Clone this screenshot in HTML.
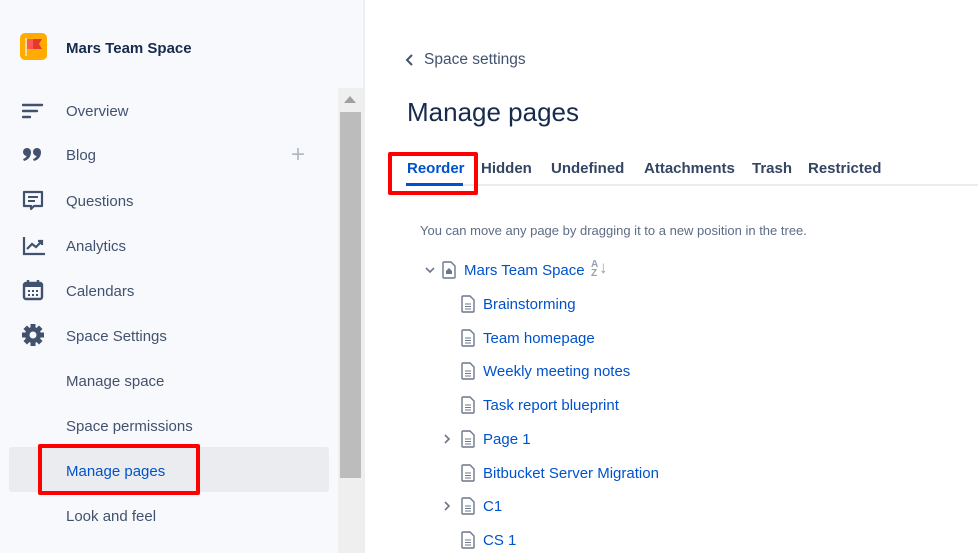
<!DOCTYPE html>
<html><head><meta charset="utf-8"><style>
*{margin:0;padding:0;box-sizing:border-box}
body{width:978px;height:553px;overflow:hidden;background:#fff;font-family:"Liberation Sans",sans-serif;position:relative}
.sb{position:absolute;left:0;top:0;width:365px;height:553px;background:#f8f9fc;border-right:2px solid #eceef2}
.abs{position:absolute}
.nav{position:absolute;left:66px;font-size:15px;color:#42526e}
.ic{position:absolute;left:22px}
.track{position:absolute;left:338px;top:88px;width:25px;height:465px;background:#efefef}
.thumb{position:absolute;left:340px;top:112px;width:21px;height:366px;background:#bcbcbc}
.red{position:absolute;border:4px solid #f00;border-radius:2px}
.tab{position:absolute;top:160px;font-size:15px;color:#344563;font-weight:bold}
.lk{position:absolute;font-size:15px;color:#0052cc}
.doc{position:absolute;width:14px;height:18px}
</style></head><body>
<div class="sb"></div>
<svg class="abs" style="left:20px;top:33px" width="27" height="27"><rect width="27" height="27" rx="5" fill="#ffab00"/><rect x="5" y="5" width="2" height="18" fill="#f4d9a0"/><path d="M7 6h15l-3 5 3 5H7z" fill="#e8372d"/><path d="M7 6h6v10H7z" fill="#ff5b4d"/></svg>
<div class="abs" style="left:66px;top:40px;font-size:15px;font-weight:bold;color:#172b4d">Mars Team Space</div>

<svg class="ic" style="top:103px" width="22" height="16"><path d="M1 2h19M1 8h14M1 14h7" stroke="#42526e" stroke-width="2.4" stroke-linecap="round"/></svg>
<div class="nav" style="top:103px">Overview</div>
<svg class="ic" style="top:147px" width="22" height="16"><g fill="#42526e"><circle cx="5" cy="5" r="4"/><path d="M9 5c0 5-3 8-7 9l-1-2c3-1 4-3 4-5z"/><circle cx="15" cy="5" r="4"/><path d="M19 5c0 5-3 8-7 9l-1-2c3-1 4-3 4-5z"/></g></svg>
<div class="nav" style="top:147px">Blog</div>
<div class="abs" style="left:291px;top:141px;font-size:24px;color:#b3bac5">+</div>
<svg class="ic" style="top:190px" width="22" height="22"><path d="M2 2h18v14h-8l-3 3v-3H2z" fill="none" stroke="#42526e" stroke-width="2.2" stroke-linejoin="round"/><path d="M6 7h10M6 11h7" stroke="#42526e" stroke-width="2"/></svg>
<div class="nav" style="top:193px">Questions</div>
<svg class="ic" style="top:236px" width="24" height="20"><path d="M2 1v17h21" fill="none" stroke="#42526e" stroke-width="2.2"/><path d="M5 13l5-5 4 3 6-6M16 5h4v4" fill="none" stroke="#42526e" stroke-width="2.2"/></svg>
<div class="nav" style="top:238px">Analytics</div>
<svg class="ic" style="top:279px" width="22" height="22"><rect x="2" y="4" width="18" height="16" rx="2" fill="none" stroke="#42526e" stroke-width="2.4"/><path d="M2 6h18" stroke="#42526e" stroke-width="4"/><path d="M6 1v4M16 1v4" stroke="#42526e" stroke-width="2.4"/><g fill="#42526e"><rect x="6" y="11" width="2" height="2"/><rect x="10" y="11" width="2" height="2"/><rect x="14" y="11" width="2" height="2"/><rect x="6" y="15" width="2" height="2"/><rect x="10" y="15" width="2" height="2"/><rect x="14" y="15" width="2" height="2"/></g></svg>
<div class="nav" style="top:283px">Calendars</div>
<svg class="ic" style="top:324px" width="22" height="22" viewBox="0 0 22 22"><g fill="#42526e"><circle cx="11" cy="11" r="8"/><g transform="translate(11 11)"><rect x="-2.5" y="-11" width="5" height="22"/><rect x="-2.5" y="-11" width="5" height="22" transform="rotate(45)"/><rect x="-2.5" y="-11" width="5" height="22" transform="rotate(90)"/><rect x="-2.5" y="-11" width="5" height="22" transform="rotate(135)"/></g></g><circle cx="11" cy="11" r="3.5" fill="#f8f9fc"/></svg>
<div class="nav" style="top:328px">Space Settings</div>
<div class="nav" style="top:373px">Manage space</div>
<div class="nav" style="top:418px">Space permissions</div>
<div class="abs" style="left:9px;top:447px;width:320px;height:45px;background:#ebecf0;border-radius:3px"></div>
<div class="nav" style="top:463px;color:#0052cc">Manage pages</div>
<div class="red" style="left:38px;top:444px;width:162px;height:51px"></div>
<div class="nav" style="top:508px">Look and feel</div>

<div class="track"></div>
<div class="abs" style="left:344px;top:96px;width:0;height:0;border-left:6px solid transparent;border-right:6px solid transparent;border-bottom:7px solid #a0a0a0"></div>
<div class="thumb"></div>

<svg class="abs" style="left:405px;top:53px" width="10" height="14"><path d="M7 2L2 7l5 5" fill="none" stroke="#42526e" stroke-width="2"/></svg>
<div class="abs" style="left:424px;top:51px;font-size:15.5px;color:#42526e">Space settings</div>
<div class="abs" style="left:407px;top:97px;font-size:26px;color:#172b4d">Manage pages</div>

<div class="abs" style="left:407px;top:184px;width:571px;height:2px;background:#ebecf0"></div>
<div class="tab" style="left:407px;color:#0052cc">Reorder</div>
<div class="abs" style="left:406px;top:183px;width:57px;height:3px;background:#0052cc"></div>
<div class="tab" style="left:481px">Hidden</div>
<div class="tab" style="left:551px">Undefined</div>
<div class="tab" style="left:644px">Attachments</div>
<div class="tab" style="left:752px">Trash</div>
<div class="tab" style="left:808px">Restricted</div>
<div class="red" style="left:388px;top:152px;width:90px;height:43px"></div>

<div class="abs" style="left:420px;top:223px;font-size:13px;color:#5e6c84">You can move any page by dragging it to a new position in the tree.</div>

<svg class="abs" style="left:424px;top:265px" width="12" height="10"><path d="M2 3l4 4 4-4" fill="none" stroke="#6b778c" stroke-width="1.6"/></svg>
<svg class="abs" style="left:442px;top:261px" width="14" height="18"><path d="M1 2a1 1 0 0 1 1-1h7l4 4v11a1 1 0 0 1-1 1H2a1 1 0 0 1-1-1z" fill="#fff" stroke="#6b778c" stroke-width="1.4"/><path d="M4 10l3-3 3 3v3H4z" fill="#6b778c"/></svg>
<div class="lk" style="left:464px;top:262px">Mars Team Space</div>
<div class="abs" style="left:591px;top:260px;font-size:10px;line-height:9px;color:#97a0af;font-weight:bold">A<br>Z</div>
<div class="abs" style="left:599px;top:258px;font-size:17px;color:#97a0af">↓</div>

<svg width="0" height="0" style="position:absolute"><defs><symbol id="d" viewBox="0 0 14 18"><path d="M1 2a1 1 0 0 1 1-1h7l4 4v11a1 1 0 0 1-1 1H2a1 1 0 0 1-1-1z" fill="#fff" stroke="#6b778c" stroke-width="1.4"/><path d="M4 9h6M4 11.5h6M4 14h6" stroke="#6b778c" stroke-width="1.1"/></symbol></defs></svg>

<svg class="doc" style="left:461px;top:295px"><use href="#d"/></svg><div class="lk" style="left:483px;top:296px">Brainstorming</div>
<svg class="doc" style="left:461px;top:329px"><use href="#d"/></svg><div class="lk" style="left:483px;top:330px">Team homepage</div>
<svg class="doc" style="left:461px;top:362px"><use href="#d"/></svg><div class="lk" style="left:483px;top:363px">Weekly meeting notes</div>
<svg class="doc" style="left:461px;top:396px"><use href="#d"/></svg><div class="lk" style="left:483px;top:397px">Task report blueprint</div>
<svg class="abs" style="left:443px;top:433px" width="8" height="12"><path d="M2 2l4 4-4 4" fill="none" stroke="#6b778c" stroke-width="1.6"/></svg>
<svg class="doc" style="left:461px;top:430px"><use href="#d"/></svg><div class="lk" style="left:483px;top:431px">Page 1</div>
<svg class="doc" style="left:461px;top:464px"><use href="#d"/></svg><div class="lk" style="left:483px;top:465px">Bitbucket Server Migration</div>
<svg class="abs" style="left:443px;top:500px" width="8" height="12"><path d="M2 2l4 4-4 4" fill="none" stroke="#6b778c" stroke-width="1.6"/></svg>
<svg class="doc" style="left:461px;top:497px"><use href="#d"/></svg><div class="lk" style="left:483px;top:498px">C1</div>
<svg class="doc" style="left:461px;top:531px"><use href="#d"/></svg><div class="lk" style="left:483px;top:532px">CS 1</div>
</body></html>
